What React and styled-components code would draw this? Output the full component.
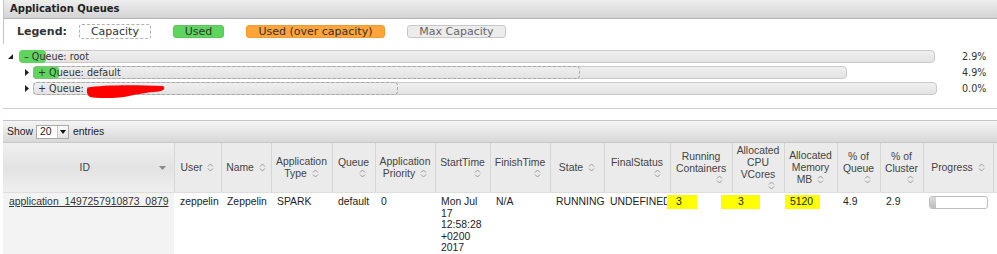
import React from 'react';
import styled, { createGlobalStyle } from 'styled-components';

const GlobalStyle = createGlobalStyle`
  body {
    margin: 0;
    background: #fff;
    font-family: "DejaVu Sans", Verdana, sans-serif;
  }
`;

const Page = styled.div`
  width: 997px;
  height: 254px;
  overflow: hidden;
`;

/* ---------- queues panel ---------- */

const TopBlock = styled.div`
  margin-left: 3px;
  border-left: 1px solid #c4c4c4;
`;

const PanelTitle = styled.div`
  height: 18px;
  line-height: 18px;
  padding-left: 6px;
  background: linear-gradient(#eeeeee, #d3d3d3);
  border-bottom: 1px solid #b4b4b4;
  font-size: 10px;
  font-weight: bold;
  color: #222;
`;

const Legend = styled.div`
  display: flex;
  align-items: center;
  height: 25px;
  padding-left: 13px;
  font-size: 11px;
  color: #333;
`;

const LegendLabel = styled.span`
  font-weight: bold;
  margin-right: 12px;
`;

const swatch = {
  capacity: 'background: #fff; border: 1px dashed #b0b0b0; height: 13px;',
  used: 'background: #5fd45f; border: 1px solid #58c858; height: 11px;',
  over: 'background: #ffa53b; border: 1px solid #f39a30; height: 11px;',
  max: 'background: #ececec; border: 1px solid #c8c8c8; height: 11px; color: #666;',
};

const LegendBox = styled.span`
  display: inline-flex;
  align-items: center;
  justify-content: center;
  box-sizing: content-box;
  width: ${({ $w }) => $w}px;
  margin-right: 22px;
  border-radius: 3px;
  line-height: 11px;
  ${({ $kind }) => swatch[$kind]}
`;

const Tree = styled.div`
  margin-top: 4px;
`;

const QueueRow = styled.div`
  display: flex;
  align-items: center;
  height: 16px;
  padding-left: ${({ $depth }) => $depth * 14 + 8}px;
`;

const Toggle = styled.span`
  display: flex;
  align-items: center;
  width: 11px;
  height: 16px;
`;

const Bar = styled.div`
  position: relative;
  box-sizing: border-box;
  height: 13px;
  width: ${({ $w }) => $w}px;
  border: 1px solid #cacaca;
  border-radius: 4px;
  background: linear-gradient(#efefef, #e3e3e3);
`;

const UsedFill = styled.span`
  position: absolute;
  left: -1px;
  top: -1px;
  bottom: -1px;
  border-radius: 4px;
  background: #5fd45f;
`;

const CapacityBox = styled.span`
  position: absolute;
  left: -1px;
  top: -1px;
  bottom: -1px;
  border: 1px dashed #a8a8a8;
  border-radius: 4px;
`;

const BarLabel = styled.span`
  position: relative;
  display: block;
  padding-left: 4px;
  font-size: 9.6px;
  line-height: 11px;
  color: #333;
  white-space: nowrap;
`;

const Scribble = styled.svg`
  position: absolute;
  left: 53px;
  top: 2px;
  overflow: visible;
`;

const Pct = styled.span`
  margin-left: auto;
  width: 35px;
  font-size: 9.6px;
  color: #333;
`;

const Divider = styled.hr`
  margin: 12px 0 0 3px;
  border: 0;
  border-top: 1px solid #cfcfcf;
  height: 0;
`;

/* ---------- applications table ---------- */

const TableBlock = styled.div`
  margin: 11px 0 0 3px;
  border-top: 1px solid #c4c4c4;
  overflow: hidden;
  font-family: "Liberation Sans", Arial, sans-serif;
  font-size: 10.4px;
  color: #333;
`;

const ShowBar = styled.div`
  display: flex;
  align-items: center;
  height: 21px;
  padding-left: 4px;
  background: linear-gradient(#f5f5f5, #d8d8d8);
  border-bottom: 1px solid #c8c8c8;
  color: #222;
`;

const Select = styled.span`
  display: inline-flex;
  align-items: center;
  justify-content: space-between;
  box-sizing: border-box;
  width: 33px;
  height: 14px;
  margin: 0 4px 0 3px;
  padding-left: 3px;
  border: 1px solid #a9a9a9;
  background: #fff;
`;

const SelectArrow = styled.span`
  display: flex;
  align-items: center;
  justify-content: center;
  width: 10px;
  height: 12px;
  border-left: 1px solid #c8c8c8;
  background: linear-gradient(#fafafa, #e2e2e2);
`;

const Table = styled.table`
  width: 1030px;
  table-layout: fixed;
  border-collapse: collapse;
`;

const Th = styled.th`
  height: 49px;
  padding: 0 2px;
  background: ${({ $sorted }) =>
    $sorted ? 'linear-gradient(#f0f0f0, #e3e3e3 50%, #efefef)' : '#ebebeb'};
  border-right: 1px solid #d6d6d6;
  border-bottom: 1px solid #dedede;
  font-weight: normal;
  line-height: 12px;
  text-align: center;
  vertical-align: middle;
  color: #444;
`;

const IdHead = styled.div`
  display: flex;
  align-items: center;
  span { flex: 1; padding-left: 6px; }
  svg { margin-right: 6px; }
`;

const SortLine = styled.div`
  height: 9px;
  line-height: 9px;
  text-align: right;
  padding-right: 7px;
`;

const Td = styled.td`
  padding: 3px 4px 0 6px;
  vertical-align: top;
  line-height: 11.5px;
  white-space: ${({ $wrap }) => ($wrap ? 'normal' : 'nowrap')};
  background: ${({ $sorted }) => ($sorted ? '#f3f3f3' : '#fff')};
  border-bottom: 3px solid #cdcdcd;
  height: 57px;
  color: #222;
`;

const AppLink = styled.a`
  color: #333;
  text-decoration: underline;
`;

const Highlight = styled.span`
  display: inline-block;
  box-sizing: border-box;
  width: ${({ $w }) => $w}px;
  margin-left: -${({ $pad }) => $pad}px;
  padding: 1px 0 1px ${({ $pad }) => $pad}px;
  margin-top: -1px;
  background: #ffff00;
`;

const ProgressTrack = styled.div`
  position: relative;
  box-sizing: border-box;
  width: 59px;
  height: 13px;
  border: 1px solid #bdbdbd;
  border-radius: 3px;
  background: #fff;
  overflow: hidden;
  span {
    display: block;
    width: 6px;
    height: 100%;
    background: linear-gradient(#dcdcdc, #bdbdbd);
  }
`;

const SortIcon = ({ inline }) => (
  <svg width="7" height="9" viewBox="0 0 7 9" style={inline ? { marginLeft: 5, verticalAlign: -1 } : undefined}>
    <path d="M1 3.5 L3.5 1 L6 3.5 M1 5.5 L3.5 8 L6 5.5" fill="none" stroke="#9a9a9a" strokeWidth="1" />
  </svg>
);

const DescIcon = () => (
  <svg width="7" height="4" viewBox="0 0 7 4">
    <path d="M0 0 H7 L3.5 4 Z" fill="#8a8a8a" />
  </svg>
);

const ExpandedIcon = () => (
  <svg width="5" height="5" viewBox="0 0 5 5">
    <path d="M5 0 V5 H0 Z" fill="#222" />
  </svg>
);

const CollapsedIcon = () => (
  <svg width="4" height="7" viewBox="0 0 4 7" style={{ marginLeft: 3 }}>
    <path d="M0 0 L4 3.5 L0 7 Z" fill="#222" />
  </svg>
);

const queues = [
  { depth: 0, open: true, sign: '–', name: 'root', bar: 916, used: 27, pct: '2.9%' },
  { depth: 1, sign: '+', name: 'default', bar: 814, used: 26, cap: 545, pct: '4.9%' },
  { depth: 1, sign: '+', name: '', bar: 904, cap: 363, pct: '0.0%', hidden: true },
];

const colWidths = [171, 47, 50, 61, 43, 60, 55, 60, 54, 66, 62, 52, 53, 43, 43, 70, 40];

const headers = [
  { lines: ['User'], inline: true },
  { lines: ['Name'], inline: true },
  { lines: ['Application', 'Type'], inline: true },
  { lines: ['Queue'] },
  { lines: ['Application', 'Priority'], inline: true },
  { lines: ['StartTime'] },
  { lines: ['FinishTime'] },
  { lines: ['State'], inline: true },
  { lines: ['FinalStatus'] },
  { lines: ['Running', 'Containers'] },
  { lines: ['Allocated', 'CPU', 'VCores'] },
  { lines: ['Allocated', 'Memory', 'MB'], inline: true },
  { lines: ['% of', 'Queue'] },
  { lines: ['% of', 'Cluster'] },
  { lines: ['Progress'], inline: true },
];

const HeaderCell = ({ lines, inline }) => (
  <Th>
    {lines.map((l, i) => (
      <div key={i}>
        {l}
        {inline && i === lines.length - 1 && <SortIcon inline />}
      </div>
    ))}
    {!inline && (
      <SortLine>
        <SortIcon />
      </SortLine>
    )}
  </Th>
);

export default function App() {
  return (
    <Page>
      <GlobalStyle />
      <TopBlock>
        <PanelTitle>Application Queues</PanelTitle>
        <Legend>
          <LegendLabel>Legend:</LegendLabel>
          <LegendBox $kind="capacity" $w={70}>Capacity</LegendBox>
          <LegendBox $kind="used" $w={49}>Used</LegendBox>
          <LegendBox $kind="over" $w={137}>Used (over capacity)</LegendBox>
          <LegendBox $kind="max" $w={97}>Max Capacity</LegendBox>
        </Legend>
      </TopBlock>

      <Tree>
        {queues.map((q, i) => (
          <QueueRow key={i} $depth={q.depth}>
            <Toggle>{q.open ? <ExpandedIcon /> : <CollapsedIcon />}</Toggle>
            <Bar $w={q.bar}>
              {q.used && <UsedFill style={{ width: q.used }} />}
              {q.cap && <CapacityBox style={{ width: q.cap }} />}
              <BarLabel>
                {q.sign} Queue: {q.name}
              </BarLabel>
              {q.hidden && (
                <Scribble width="78" height="13" viewBox="0 0 78 13">
                  <path
                    d="M0.5 2.5 C 14 0, 44 -0.5, 76 1 C 78.5 2.5, 77.5 5.5, 72 6.5 C 60 7.5, 50 9, 40 11.5 C 28 13.5, 10 13.5, 3 12 C -0.5 10, -0.5 5, 0.5 2.5 Z"
                    fill="#ff0000"
                  />
                </Scribble>
              )}
            </Bar>
            <Pct>{q.pct}</Pct>
          </QueueRow>
        ))}
      </Tree>

      <Divider />

      <TableBlock>
        <ShowBar>
          Show
          <Select>
            20
            <SelectArrow>
              <svg width="6" height="4" viewBox="0 0 6 4">
                <path d="M0 0 H6 L3 4 Z" fill="#111" />
              </svg>
            </SelectArrow>
          </Select>
          entries
        </ShowBar>
        <Table>
          <colgroup>
            {colWidths.map((w, i) => (
              <col key={i} style={{ width: w }} />
            ))}
          </colgroup>
          <thead>
            <tr>
              <Th $sorted>
                <IdHead>
                  <span>ID</span>
                  <DescIcon />
                </IdHead>
              </Th>
              {headers.map((h, i) => (
                <HeaderCell key={i} {...h} />
              ))}
              <Th />
            </tr>
          </thead>
          <tbody>
            <tr>
              <Td $sorted>
                <AppLink href="#">application_1497257910873_0879</AppLink>
              </Td>
              <Td>zeppelin</Td>
              <Td>Zeppelin</Td>
              <Td>SPARK</Td>
              <Td>default</Td>
              <Td>0</Td>
              <Td $wrap>Mon Jul 17 12:58:28 +0200 2017</Td>
              <Td>N/A</Td>
              <Td>RUNNING</Td>
              <Td>UNDEFINED</Td>
              <Td>
                <Highlight $pad={9} $w={30}>3</Highlight>
              </Td>
              <Td>
                <Highlight $pad={17} $w={39}>3</Highlight>
              </Td>
              <Td>
                <Highlight $pad={5} $w={35}>5120</Highlight>
              </Td>
              <Td>4.9</Td>
              <Td>2.9</Td>
              <Td>
                <ProgressTrack>
                  <span />
                </ProgressTrack>
              </Td>
              <Td />
            </tr>
          </tbody>
        </Table>
      </TableBlock>
    </Page>
  );
}
